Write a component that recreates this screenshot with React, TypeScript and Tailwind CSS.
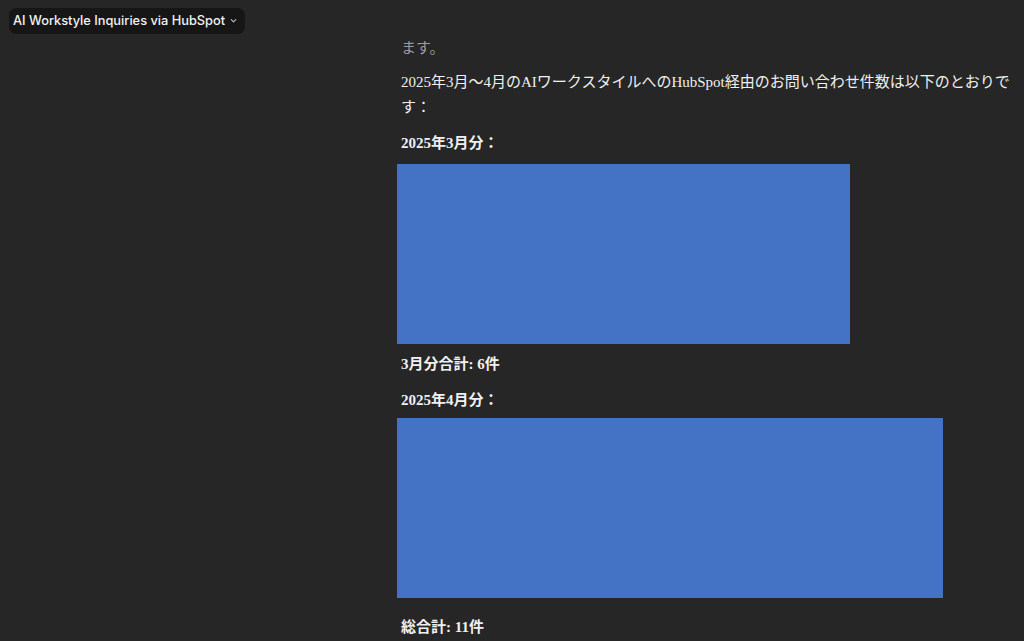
import React from "react";

export default function App() {
  const body = {
    fontFamily: '"Liberation Serif", "Noto Sans CJK JP", serif',
  } as React.CSSProperties;
  return (
    <div className="w-[1024px] h-[641px] overflow-hidden bg-[#262626] flex flex-col">
      <div className="pt-[7px] pl-[9px] h-[35px] shrink-0">
        <div
          className="inline-flex items-center h-[26px] pl-[4px] pr-[7px] rounded-[7px] bg-[#161616] text-[#f2f2f2] text-[12.8px] font-medium gap-[4px]"
          style={{ fontFamily: 'Inter, "Noto Sans", sans-serif' }}
        >
          <span>AI Workstyle Inquiries via HubSpot</span>
          <svg width="9" height="9" viewBox="0 0 10 10" fill="none" stroke="#bdbdbd" strokeWidth="1.2" strokeLinecap="round" strokeLinejoin="round">
            <path d="M2.5 4l2.5 2.5L7.5 4" />
          </svg>
        </div>
      </div>
      <div className="pl-[401px] pr-[8px] text-[15px] leading-[25px] text-[#f0f0f0]" style={body}>
        <p className="mt-[0.5px] text-[#9c9c9c]">ます。</p>
        <p className="mt-[9px] w-[616px]">
          2025年3月～4月のAIワークスタイルへのHubSpot経由のお問い合わせ件数は以下のとおりです：
        </p>
        <p className="mt-[11px] font-bold">2025年3月分：</p>
        <div className="mt-[8.5px] ml-[-4px] w-[453px] h-[180px] bg-[#4472c4]" />
        <p className="mt-[7.5px] font-bold">3月分合計: 6件</p>
        <p className="mt-[11px] font-bold">2025年4月分：</p>
        <div className="mt-[5.5px] ml-[-4px] w-[546px] h-[180px] bg-[#4472c4]" />
        <p className="mt-[16.5px] font-bold">総合計: 11件</p>
      </div>
    </div>
  );
}
